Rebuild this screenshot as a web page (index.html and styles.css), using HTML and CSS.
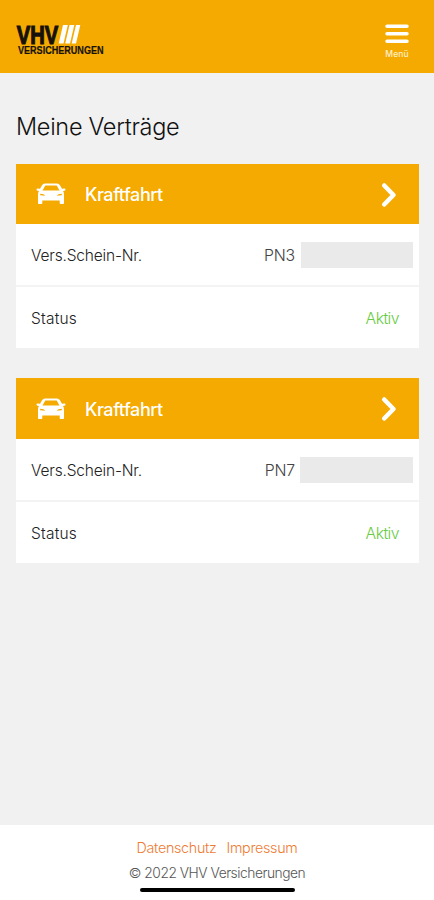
FILE: index.html
```html
<!DOCTYPE html>
<html lang="de">
<head>
<meta charset="utf-8">
<meta name="viewport" content="width=device-width, initial-scale=1">
<title>Meine Verträge</title>
<link rel="stylesheet" href="styles.css">
</head>
<body>
<header class="header">
  <svg class="logo" viewBox="0 0 90 34" role="img" aria-label="VHV Versicherungen">
    <text class="logo-name" x="0.8" y="19.500" textLength="41.500" lengthAdjust="spacingAndGlyphs">VHV</text>
    <path class="logo-bars" d="M47 1h4.800l-4.300 18.500h-4.800zM53.500 1h4.800l-4.300 18.500h-4.800zM60 1h4.300l-4.300 18.500h-4.300z"/>
    <text class="logo-sub" x="2" y="30.200" textLength="85.500" lengthAdjust="spacingAndGlyphs">VERSICHERUNGEN</text>
  </svg>
  <button class="menu" type="button">
    <svg class="menu-icon" viewBox="0 0 24 20"><path d="M2 2.200h20M2 9.700h20M2 17.200h20"/></svg>
    <span class="menu-label">Menü</span>
  </button>
</header>
<main class="main">
  <h1 class="title">Meine Verträge</h1>
  <section class="card">
    <div class="card-head">
      <svg class="car" viewBox="0 0 30 22"><path fill-rule="evenodd" d="M9 .5h12q2 0 3 1.700l2 3.600 2.500-.3q1 .2 1 1.100 0 1-1 1.200l-1.500.3q1 1.500 1 3.400v8.800q0 .7-.8.700h-2.700q-.8 0-.8-.8v-2.700H6.300v2.700q0 .8-.8.800H2.800q-.8 0-.8-.7v-8.800q0-1.900 1-3.400l-1.500-.3q-1-.2-1-1.200 0-.9 1-1.100l2.500.3 2-3.600Q7 .5 9 .5zM9.300 2.500 6.500 7.500h17l-2.800-5zM4.200 10.800v1.500l5 .5q-1-2-5-2zM25.800 10.800q-4 0-5 2l5-.5z"/></svg>
      <h2 class="card-title">Kraftfahrt</h2>
      <svg class="chevron" viewBox="0 0 16 26"><path d="M3.200 3.500 12.500 13 3.200 22.500"/></svg>
    </div>
    <div class="row"><span class="label">Vers.Schein-Nr.</span><span class="value">PN3</span><span class="redacted"></span></div>
    <div class="row"><span class="label label-wide">Status</span><span class="status">Aktiv</span></div>
  </section>
  <section class="card card-tall">
    <div class="card-head">
      <svg class="car" viewBox="0 0 30 22"><path fill-rule="evenodd" d="M9 .5h12q2 0 3 1.700l2 3.600 2.500-.3q1 .2 1 1.100 0 1-1 1.200l-1.500.3q1 1.500 1 3.400v8.800q0 .7-.8.700h-2.700q-.8 0-.8-.8v-2.700H6.300v2.700q0 .8-.8.800H2.800q-.8 0-.8-.7v-8.800q0-1.900 1-3.400l-1.500-.3q-1-.2-1-1.200 0-.9 1-1.100l2.500.3 2-3.600Q7 .5 9 .5zM9.300 2.500 6.500 7.500h17l-2.800-5zM4.200 10.800v1.500l5 .5q-1-2-5-2zM25.800 10.800q-4 0-5 2l5-.5z"/></svg>
      <h2 class="card-title">Kraftfahrt</h2>
      <svg class="chevron" viewBox="0 0 16 26"><path d="M3.200 3.500 12.500 13 3.200 22.500"/></svg>
    </div>
    <div class="row"><span class="label">Vers.Schein-Nr.</span><span class="value">PN7</span><span class="redacted"></span></div>
    <div class="row"><span class="label label-wide">Status</span><span class="status">Aktiv</span></div>
  </section>
</main>
<footer class="footer">
  <nav class="links"><a href="#">Datenschutz</a><a href="#">Impressum</a></nav>
  <p class="copyright">© 2022 VHV Versicherungen</p>
  <div class="home-bar"></div>
</footer>
</body>
</html>
```
FILE: styles.css
```css
* { box-sizing: border-box; }
body {
  margin: 0;
  height: 900px;
  display: flex;
  flex-direction: column;
  background: #f1f1f1;
  color: #222;
  font-family: Inter, "Liberation Sans", sans-serif;
  font-weight: 300;
}
.header {
  height: 73px;
  flex: none;
  display: flex;
  justify-content: space-between;
  align-items: flex-start;
  padding: 24px 22px 0 16px;
  background: #f4aa00;
}
.logo { width: 90px; height: 34px; overflow: visible; }
.logo-name { font: bold 25.500px "Liberation Sans", sans-serif; fill: #16110a; stroke: #16110a; stroke-width: 1.200px; }
.logo-sub { font: bold 11px "Liberation Sans", sans-serif; fill: #16110a; stroke: #16110a; stroke-width: .2px; }
.logo-bars { fill: #fff; }
.menu {
  width: 30px;
  padding: 0;
  border: 0;
  background: none;
  font: 500 8.500px/10px Inter, sans-serif;
  display: flex;
  flex-direction: column;
  align-items: center;
  gap: 5px;
}
.menu-icon { width: 24px; height: 20px; fill: none; stroke: #fff; stroke-width: 3.500px; stroke-linecap: round; }
.menu-label { color: #fff0cc; letter-spacing: .1px; }
.main { flex: 1; padding: 37px 15px 0 16px; }
.title {
  margin: 0 0 20px;
  font-size: 23.500px;
  line-height: 34px;
  font-weight: 300;
  letter-spacing: -.3px;
  color: #111;
}
.card { margin-bottom: 30px; background: #fff; }
.card-head {
  height: 60px;
  display: flex;
  align-items: center;
  padding: 0 22px 0 20px;
  background: #f4aa00;
  color: #fff;
}
.card-tall .card-head { height: 61px; }
.car { width: 30px; height: 22px; fill: #fff; }
.card-title { margin: 2px auto 0 19px; font-size: 18px; font-weight: 450; line-height: 24px; letter-spacing: -.45px; }
.chevron { width: 16px; height: 26px; margin-top: 1px; fill: none; stroke: #fff; stroke-width: 4.500px; stroke-linecap: round; stroke-linejoin: round; }
.row {
  height: 61px;
  display: flex;
  align-items: center;
  padding: 1px 20px 0 15px;
  font-size: 15.800px;
  letter-spacing: -.2px;
}
.row + .row { border-top: 2px solid #f3f3f3; height: 63px; }
.card-head + .row { padding-right: 6px; }
.label { margin-right: auto; font-weight: 350; font-size: 15.500px; letter-spacing: -.18px; }
.label-wide { letter-spacing: .2px; }
.value { color: #444; }
.redacted { width: 112px; height: 26px; margin-left: 6px; background: #eaeaea; }
.card-tall .redacted { width: 113px; margin-left: 5px; }
.status { color: #68cb42; letter-spacing: -.55px; }
.footer {
  height: 75px;
  display: flex;
  flex-direction: column;
  align-items: center;
  padding-top: 11px;
  background: #fff;
}
.links { display: flex; gap: 10px; font-size: 14.300px; line-height: 24px; letter-spacing: -.3px; }
.links a { color: #ee7b32; text-decoration: none; }
.copyright { margin: 1px 0 3px; font-size: 13.800px; line-height: 24px; letter-spacing: -.48px; color: #555; }
.home-bar { width: 155px; height: 4px; border-radius: 2px; background: #000; }
```
